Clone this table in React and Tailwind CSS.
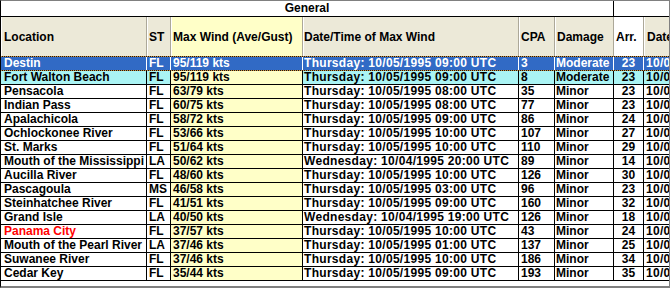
import React from "react";

const rows = [
  ["Destin", "FL", "95/119 kts", "Thursday: 10/05/1995 09:00 UTC", "3", "Moderate", "23"],
  ["Fort Walton Beach", "FL", "95/119 kts", "Thursday: 10/05/1995 09:00 UTC", "8", "Moderate", "23"],
  ["Pensacola", "FL", "63/79 kts", "Thursday: 10/05/1995 08:00 UTC", "35", "Minor", "23"],
  ["Indian Pass", "FL", "60/75 kts", "Thursday: 10/05/1995 08:00 UTC", "77", "Minor", "23"],
  ["Apalachicola", "FL", "58/72 kts", "Thursday: 10/05/1995 09:00 UTC", "86", "Minor", "24"],
  ["Ochlockonee River", "FL", "53/66 kts", "Thursday: 10/05/1995 10:00 UTC", "107", "Minor", "27"],
  ["St. Marks", "FL", "51/64 kts", "Thursday: 10/05/1995 10:00 UTC", "110", "Minor", "29"],
  ["Mouth of the Mississippi", "LA", "50/62 kts", "Wednesday: 10/04/1995 20:00 UTC", "89", "Minor", "14"],
  ["Aucilla River", "FL", "48/60 kts", "Thursday: 10/05/1995 10:00 UTC", "126", "Minor", "30"],
  ["Pascagoula", "MS", "46/58 kts", "Thursday: 10/05/1995 03:00 UTC", "96", "Minor", "23"],
  ["Steinhatchee River", "FL", "41/51 kts", "Thursday: 10/05/1995 09:00 UTC", "160", "Minor", "32"],
  ["Grand Isle", "LA", "40/50 kts", "Wednesday: 10/04/1995 19:00 UTC", "126", "Minor", "18"],
  ["Panama City", "FL", "37/57 kts", "Thursday: 10/05/1995 10:00 UTC", "43", "Minor", "24"],
  ["Mouth of the Pearl River", "LA", "37/46 kts", "Thursday: 10/05/1995 01:00 UTC", "137", "Minor", "25"],
  ["Suwanee River", "FL", "37/46 kts", "Thursday: 10/05/1995 10:00 UTC", "186", "Minor", "34"],
  ["Cedar Key", "FL", "35/44 kts", "Thursday: 10/05/1995 09:00 UTC", "193", "Minor", "35"],
];

function Dotted() {
  return (
    <div className="h-px w-full shrink-0 bg-[repeating-linear-gradient(90deg,#d0903c_0px,#d0903c_1px,#1a1a1a_1px,#1a1a1a_2px)]" />
  );
}

function Row({ r, i }) {
  const sel = i === 0;
  const aqua = i === 1;
  const bg = sel ? "bg-[#316ac5] text-white" : aqua ? "bg-[#aaf4f4] text-black" : "bg-white text-black";
  const line = sel ? "border-white" : "border-black";
  const yellow = sel ? "" : "bg-[#ffffc8]";
  const locColor = r[0] === "Panama City" ? "text-[#ff0000]" : "";
  const cells = (
    <div className={`flex h-[13px] leading-[13px] ${bg}`}>
      <div className={`w-[146px] shrink-0 border-r ${line} pl-[3px] overflow-hidden whitespace-nowrap ${locColor}`}>{r[0]}</div>
      <div className={`w-[24px] shrink-0 border-r ${line} pl-[2px] overflow-hidden whitespace-nowrap`}>{r[1]}</div>
      <div className={`w-[132px] shrink-0 border-r ${line} pl-[2px] overflow-hidden whitespace-nowrap ${yellow}`}>{r[2]}</div>
      <div className={`w-[216px] shrink-0 border-r ${line} pl-[1px] overflow-hidden whitespace-nowrap tracking-[0.3px]`}>{r[3]}</div>
      <div className={`w-[36px] shrink-0 border-r ${line} pl-[2px] overflow-hidden whitespace-nowrap`}>{r[4]}</div>
      <div className={`w-[59px] shrink-0 border-r ${line} pl-[1px] overflow-hidden whitespace-nowrap`}>{r[5]}</div>
      <div className={`w-[30px] shrink-0 border-r ${line} text-center overflow-hidden whitespace-nowrap`}>{r[6]}</div>
      <div className="w-[90px] shrink-0 pl-[2px] overflow-hidden whitespace-nowrap tracking-[0.3px]">10/05/1995 09:00 UTC</div>
    </div>
  );
  if (sel) {
    return (
      <div className="flex flex-col">
        <Dotted />
        {cells}
        <Dotted />
      </div>
    );
  }
  return <div className="flex flex-col border-b border-black">{cells}</div>;
}

export default function App() {
  const hcell = "shrink-0 flex items-center border-r border-[#aca899] shadow-[inset_1px_0_0_#ffffff] overflow-hidden whitespace-nowrap";
  return (
    <div className="w-[670px] h-[288px] flex flex-col bg-white border-t border-t-[#808080] border-l border-l-black border-r border-r-[#808080] border-b-2 border-b-[#808080] overflow-hidden font-['Liberation_Sans',Arial,sans-serif] font-bold text-[12px] text-black">
      <div className="flex h-[16px] shrink-0 border-b border-black leading-[15px]">
        <div className="w-[613px] shrink-0 border-r border-black text-center">General</div>
        <div className="flex-1 bg-white" />
      </div>
      <div className="flex h-[39px] shrink-0 bg-[#ece9d8]">
        <div className={`w-[146px] pl-[3px] ${hcell}`}>Location</div>
        <div className={`w-[24px] pl-[2px] ${hcell}`}>ST</div>
        <div className={`w-[132px] pl-[2px] bg-[#ffffc8] ${hcell}`}>Max Wind (Ave/Gust)</div>
        <div className={`w-[216px] pl-[1px] ${hcell}`}>Date/Time of Max Wind</div>
        <div className={`w-[36px] pl-[2px] ${hcell}`}>CPA</div>
        <div className={`w-[59px] pl-[2px] ${hcell}`}>Damage</div>
        <div className={`w-[30px] pl-[2px] bg-white ${hcell}`}>Arr.</div>
        <div className={`w-[90px] pl-[3px] ${hcell}`}>Date</div>
      </div>
      <div className="flex flex-col shrink-0">
        {rows.map((r, i) => (
          <Row key={i} r={r} i={i} />
        ))}
      </div>
      <div className="flex-1 bg-white" />
    </div>
  );
}
